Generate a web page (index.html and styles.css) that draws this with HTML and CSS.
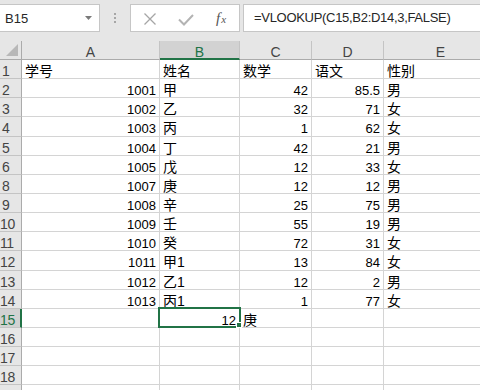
FILE: index.html
```html
<!DOCTYPE html>
<html lang="zh-CN">
<head>
    <meta charset="UTF-8">
    <meta name="viewport" content="width=device-width, initial-scale=1.0">
    <title>VLOOKUP</title>
    <link rel="stylesheet" href="styles.css">
</head>
<body>
    <div class="bar">
        <div class="namebox">
            <span>B15</span>
            <svg class="caret" width="7" height="4" viewBox="0 0 7 4"><path d="M0 0h7L3.5 4z" fill="#7a7a7a"/></svg>
        </div>
        <div class="grip"><i></i><i></i><i></i></div>
        <div class="btns">
            <svg class="ic-x" width="14" height="14" viewBox="0 0 14 14"><path d="M1.5 1.5l11 11M12.5 1.5l-11 11" stroke="#a6a6a6" stroke-width="1.3" fill="none"/></svg>
            <svg class="ic-ok" width="16" height="12" viewBox="0 0 16 12"><path d="M1 5.5l5 5L15 1" stroke="#b3b3b3" stroke-width="2" fill="none"/></svg>
            <span class="fx">f<small>x</small></span>
        </div>
        <div class="formula">=VLOOKUP(C15,B2:D14,3,FALSE)</div>
    </div>

    <div class="sheet">
        <div class="hd corner"><svg width="12" height="12" viewBox="0 0 12 12"><path d="M12 0v12H0z" fill="#b8b8b8"/></svg></div>
        <div class="hd col">A</div><div class="hd col on">B</div><div class="hd col">C</div><div class="hd col">D</div><div class="hd col">E</div>

        <div class="hd rn">1</div><div class="c">学号</div><div class="c">姓名</div><div class="c">数学</div><div class="c">语文</div><div class="c">性别</div>
        <div class="hd rn">2</div><div class="c n">1001</div><div class="c">甲</div><div class="c n">42</div><div class="c n">85.5</div><div class="c">男</div>
        <div class="hd rn">3</div><div class="c n">1002</div><div class="c">乙</div><div class="c n">32</div><div class="c n">71</div><div class="c">女</div>
        <div class="hd rn">4</div><div class="c n">1003</div><div class="c">丙</div><div class="c n">1</div><div class="c n">62</div><div class="c">女</div>
        <div class="hd rn">5</div><div class="c n">1004</div><div class="c">丁</div><div class="c n">42</div><div class="c n">21</div><div class="c">男</div>
        <div class="hd rn">6</div><div class="c n">1005</div><div class="c">戊</div><div class="c n">12</div><div class="c n">33</div><div class="c">女</div>
        <div class="hd rn">8</div><div class="c n">1007</div><div class="c">庚</div><div class="c n">12</div><div class="c n">12</div><div class="c">男</div>
        <div class="hd rn">9</div><div class="c n">1008</div><div class="c">辛</div><div class="c n">25</div><div class="c n">75</div><div class="c">男</div>
        <div class="hd rn two">10</div><div class="c n">1009</div><div class="c">壬</div><div class="c n">55</div><div class="c n">19</div><div class="c">男</div>
        <div class="hd rn two">11</div><div class="c n">1010</div><div class="c">癸</div><div class="c n">72</div><div class="c n">31</div><div class="c">女</div>
        <div class="hd rn two">12</div><div class="c n">1011</div><div class="c">甲1</div><div class="c n">13</div><div class="c n">84</div><div class="c">女</div>
        <div class="hd rn two">13</div><div class="c n">1012</div><div class="c">乙1</div><div class="c n">12</div><div class="c n">2</div><div class="c">男</div>
        <div class="hd rn two">14</div><div class="c n">1013</div><div class="c">丙1</div><div class="c n">1</div><div class="c n">77</div><div class="c">女</div>
        <div class="hd rn two on">15</div><div class="c"></div><div class="c n sel">12</div><div class="c">庚</div><div class="c"></div><div class="c"></div>
        <div class="hd rn two">16</div><div class="c"></div><div class="c"></div><div class="c"></div><div class="c"></div><div class="c"></div>
        <div class="hd rn two">17</div><div class="c"></div><div class="c"></div><div class="c"></div><div class="c"></div><div class="c"></div>
        <div class="hd rn two">18</div><div class="c"></div><div class="c"></div><div class="c"></div><div class="c"></div><div class="c"></div>
        <div class="hd rn two"></div><div class="c"></div><div class="c"></div><div class="c"></div><div class="c"></div><div class="c"></div>
    </div>
</body>
</html>
```

FILE: styles.css
```css
html, body {
    margin: 0;
    padding: 0;
    height: 390px;
    overflow: hidden;
    background-color: #fff;
    font-family: "Liberation Sans", "Noto Sans CJK SC", sans-serif;
    color: #000;
}
.bar {
    display: flex;
    align-items: flex-start;
    height: 41px;
    padding-top: 4px;
    box-sizing: border-box;
    background-color: #e6e6e6;
}
.namebox {
    width: 100px;
    height: 28px;
    box-sizing: border-box;
    background-color: #fff;
    border: 1px solid #c6c6c6;
    border-left: none;
    display: flex;
    align-items: center;
    justify-content: space-between;
    padding: 0 7px 0 5px;
    font-size: 13px;
    color: #262626;
}
.grip {
    width: 30px;
    display: flex;
    flex-direction: column;
    align-items: center;
    gap: 2px;
    padding-top: 9px;
}
.grip i {
    display: block;
    width: 2px;
    height: 2px;
    background-color: #a6a6a6;
}
.btns {
    width: 110px;
    height: 28px;
    box-sizing: border-box;
    background-color: #fff;
    border: 1px solid #c6c6c6;
    margin-right: 3px;
    display: flex;
    align-items: center;
}
.ic-x {
    margin-left: 12px;
    margin-top: 2px;
}
.ic-ok {
    margin-left: 21px;
    margin-top: 4px;
}
.fx {
    margin-left: 22px;
    font-family: "Liberation Serif", serif;
    font-style: italic;
    font-size: 15px;
    color: #555;
}
.fx small {
    font-size: 11px;
    margin-left: 1px;
}
.formula {
    flex: 1;
    height: 28px;
    box-sizing: border-box;
    background-color: #fff;
    border: 1px solid #c6c6c6;
    border-right: none;
    padding-left: 10px;
    font-size: 13px;
    letter-spacing: -0.3px;
    line-height: 26px;
    color: #262626;
    white-space: nowrap;
}
.sheet {
    display: grid;
    grid-template-columns: 22px 138px 80px 72px 72px 114px;
    grid-template-rows: 19px;
    grid-auto-rows: 19.15px;
    width: 480px;
    overflow: hidden;
}
.sheet > div {
    box-sizing: border-box;
    white-space: nowrap;
    padding-top: 4px;
    line-height: 15px;
}
.hd {
    background-color: #e6e6e6;
    color: #444;
    font-size: 14px;
    border-right: 1px solid #c4c4c4;
    border-bottom: 1px solid #c4c4c4;
}
.col {
    text-align: center;
    border-bottom-color: #ababab;
}
.col.on {
    background-color: #d2d2d2;
    color: #217346;
    border-bottom: 2px solid #217346;
}
.corner {
    border-bottom-color: #ababab;
    border-right-color: #ababab;
    display: flex;
    justify-content: flex-end;
    align-items: flex-end;
}
.sheet > .corner {
    padding: 0 3px 3px 0;
}
.rn {
    padding-left: 2px;
    border-right-color: #ababab;
}
.rn.two {
    padding-left: 0;
    letter-spacing: -0.4px;
}
.rn.on {
    background-color: #d2d2d2;
    color: #217346;
    border-right: 2px solid #217346;
}
.c {
    font-size: 14px;
    padding-left: 3px;
    padding-right: 3px;
    border-right: 1px solid #d4d4d4;
    border-bottom: 1px solid #d4d4d4;
}
.n {
    text-align: right;
    font-size: 13px;
}
.sel {
    position: relative;
}
.sel::before {
    content: "";
    position: absolute;
    top: -2px;
    left: -2px;
    right: -2px;
    bottom: -1px;
    border: 2px solid #217346;
    z-index: 1;
}
.sel::after {
    content: "";
    position: absolute;
    right: -3px;
    bottom: -1px;
    width: 4px;
    height: 4px;
    background-color: #217346;
    border: 1px solid #fff;
    z-index: 2;
}
```
